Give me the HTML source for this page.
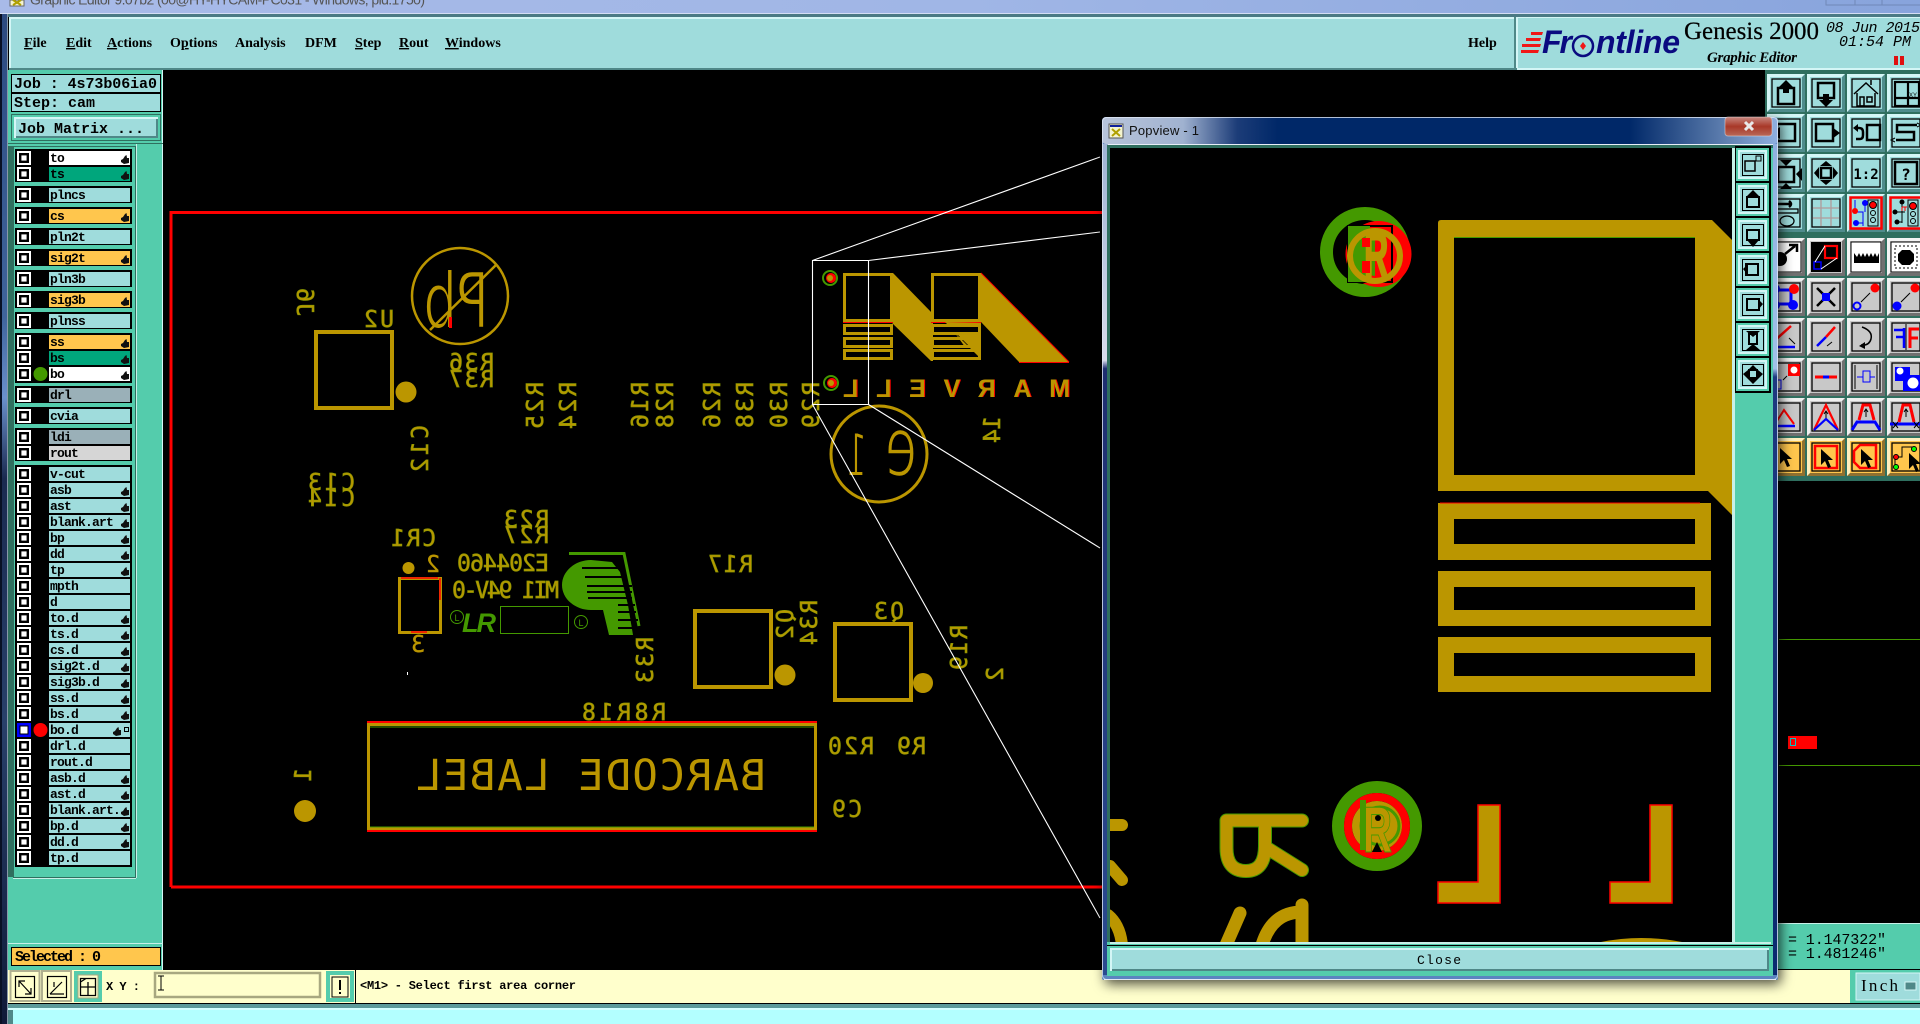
<!DOCTYPE html>
<html><head><meta charset="utf-8"><title>Graphic Editor</title>
<style>
html,body{margin:0;padding:0;background:#000;width:1920px;height:1024px;overflow:hidden}
svg{display:block}
.m{font-family:"Liberation Serif",serif;font-weight:700;font-size:14px;fill:#000}
.j{font-family:"Liberation Mono",monospace;font-weight:700;font-size:15px;fill:#000}
.l{font-family:"Liberation Mono",monospace;font-weight:700;font-size:13px;letter-spacing:-.8px;fill:#000}
.p{font-family:"DejaVu Sans Mono",monospace;font-size:23px;fill:#bb9600;stroke:#8c9a00;stroke-width:.7}
.q{font-family:"DejaVu Sans Mono",monospace;font-size:23px;fill:#bb9600;stroke:#bb9600;stroke-width:.4}
</style></head><body>
<svg xmlns="http://www.w3.org/2000/svg" width="1920" height="1024" viewBox="0 0 1920 1024">
<defs>
<linearGradient id="tb" x1="0" x2="1" y1="0" y2="0"><stop offset="0" stop-color="#a8bae8"/><stop offset=".5" stop-color="#a0b6e6"/><stop offset="1" stop-color="#88a4dc"/></linearGradient>
<linearGradient id="ls" x1="0" x2="0" y1="0" y2="1"><stop offset="0" stop-color="#2c4a80"/><stop offset=".3" stop-color="#3f649c"/><stop offset=".38" stop-color="#6a90cc"/><stop offset=".46" stop-color="#1a2a50"/><stop offset=".7" stop-color="#28406a"/><stop offset="1" stop-color="#101a38"/></linearGradient>
<linearGradient id="pt" x1="0" x2="1" y1="0" y2="0"><stop offset="0" stop-color="#b8c4da"/><stop offset=".12" stop-color="#a0b2d0"/><stop offset=".2" stop-color="#1c3c78"/><stop offset=".26" stop-color="#002868"/><stop offset=".78" stop-color="#002868"/><stop offset=".93" stop-color="#6484b4"/><stop offset="1" stop-color="#8fb0e0"/></linearGradient>
<linearGradient id="pl" x1="0" x2="0" y1="0" y2="1"><stop offset="0" stop-color="#9fb4d4"/><stop offset=".26" stop-color="#d8dcec"/><stop offset=".27" stop-color="#1e2e70"/><stop offset="1" stop-color="#2a4a90"/></linearGradient>
<linearGradient id="pr" x1="0" x2="0" y1="0" y2="1"><stop offset="0" stop-color="#8fb0e0"/><stop offset=".27" stop-color="#a0c0e8"/><stop offset=".28" stop-color="#1e3a80"/><stop offset="1" stop-color="#0a2a70"/></linearGradient>
<linearGradient id="rb" x1="0" x2="0" y1="0" y2="1"><stop offset="0" stop-color="#c88880"/><stop offset=".5" stop-color="#a83828"/><stop offset="1" stop-color="#b86858"/></linearGradient>
<filter id="sh" x="-5%" y="-5%" width="110%" height="110%"><feDropShadow dx="3" dy="4" stdDeviation="6" flood-color="#000" flood-opacity=".7"/></filter>
<g id="cb"><rect width="14" height="14" fill="#fff"/><rect x="3.200" y="3.200" width="7.600" height="7.600" fill="#fff" stroke="#000" stroke-width="2.400"/></g>
<path id="h" d="M0 5L2 4 4 1 5.500 0 6 3H8V8L3 9 0 7Z" fill="#111"/>
<g id="bt"><rect width="38" height="38" fill="#d4f6f6"/><path d="M38 0V38H0L3 35H35V3Z" fill="#4f8c8c"/><rect x="3" y="3" width="32" height="32" fill="#9fdcdc"/><rect x="5" y="5" width="28" height="28" fill="none" stroke="#000" stroke-width="1.300"/></g>
<g id="bg"><rect width="38" height="38" fill="#f0f0f0"/><path d="M38 0V38H0L3 35H35V3Z" fill="#707070"/><rect x="3" y="3" width="32" height="32" fill="#c8c8c8"/><rect x="5" y="5" width="28" height="28" fill="none" stroke="#000" stroke-width="1.300"/></g>
<g id="bo"><rect width="38" height="38" fill="#fff0c0"/><path d="M38 0V38H0L3 35H35V3Z" fill="#907030"/><rect x="3" y="3" width="32" height="32" fill="#ffc64d"/><rect x="5" y="5" width="28" height="28" fill="none" stroke="#000" stroke-width="1.300"/></g>
<g id="bw"><rect width="38" height="38" fill="#f4f4f4"/><path d="M38 0V38H0L3 35H35V3Z" fill="#707070"/><rect x="3" y="3" width="32" height="32" fill="#c8c8c8"/></g>
<path id="ar" d="M0 0L0 16 4 12 7 19 10 18 7 11 12 11Z" fill="#000"/>
</defs>

<!-- desktop title -->
<rect width="1920" height="1024" fill="#000"/>
<rect width="1920" height="14" fill="url(#tb)"/>
<rect y="13" width="1920" height="1" fill="#d4def4"/>
<rect x="10" y="0" width="14" height="6" fill="#f4f4d0" stroke="#666"/><path d="M13 0L21 5M21 0L13 5" stroke="#b0a000" stroke-width="2"/>
<text x="30" y="4.500" font-family="'Liberation Sans',sans-serif" font-size="14" fill="#555" textLength="395">Graphic Editor 9.07b2 (00@HY-HYCAM-PC031 - Windows, pid.1750)</text>
<path d="M1826 0V5H1920M1855 0V5M1882 0V5" fill="none" stroke="#7088b8"/>
<rect y="14" width="8" height="1010" fill="url(#ls)"/><rect width="2" y="14" height="1010" fill="#081024"/><rect x="7" y="14" width="1" height="1010" fill="#8898a8"/>

<!-- menu bar -->
<rect x="8" y="14" width="1912" height="3" fill="#4a7a84"/>
<rect x="9" y="17" width="1508" height="53" fill="#d4f6f6"/><rect x="11" y="19" width="1504" height="49" fill="#9fdcdc"/><rect x="9" y="68" width="1508" height="2" fill="#4f8888"/>
<text class="m" x="24" y="47"><tspan text-decoration="underline">F</tspan>ile</text>
<text class="m" x="66" y="47"><tspan text-decoration="underline">E</tspan>dit</text>
<text class="m" x="107" y="47"><tspan text-decoration="underline">A</tspan>ctions</text>
<text class="m" x="170" y="47">O<tspan text-decoration="underline">p</tspan>tions</text>
<text class="m" x="235" y="47">Analysis</text>
<text class="m" x="305" y="47">DFM</text>
<text class="m" x="355" y="47"><tspan text-decoration="underline">S</tspan>tep</text>
<text class="m" x="399" y="47"><tspan text-decoration="underline">R</tspan>out</text>
<text class="m" x="445" y="47"><tspan text-decoration="underline">W</tspan>indows</text>
<text class="m" x="1468" y="47">Help</text>
<!-- frontline panel -->
<rect x="1517" y="17" width="403" height="53" fill="#d4f6f6"/><rect x="1518" y="18" width="402" height="50" fill="#9fdcdc"/><rect x="1514" y="17" width="2" height="53" fill="#4f8888"/>
<path d="M1531 32H1543L1542 35H1531ZM1526 38H1541L1540 41H1526ZM1522 44H1541L1540 47H1522ZM1521 50H1539L1538 53H1521Z" fill="#f01818"/>
<text x="1542" y="53" font-family="'Liberation Sans',sans-serif" font-weight="700" font-style="italic" font-size="32" fill="#0a0a80" textLength="30">Fr</text>
<circle cx="1583" cy="46" r="10" fill="none" stroke="#0a0a80" stroke-width="2.500"/><path d="M1583 42L1586 46 1583 50 1580 46Z" fill="#f01818"/>
<text x="1596" y="53" font-family="'Liberation Sans',sans-serif" font-weight="700" font-style="italic" font-size="32" fill="#0a0a80" textLength="84">ntline</text>
<text x="1684" y="39" font-family="'Liberation Serif',serif" font-size="25" fill="#000" stroke="#000" stroke-width=".2" textLength="135">Genesis 2000</text>
<text x="1707" y="62" font-family="'Liberation Serif',serif" font-weight="700" font-style="italic" font-size="15" fill="#000" textLength="90">Graphic Editor</text>
<text x="1826" y="32" font-family="'Liberation Mono',monospace" font-style="italic" font-size="15" fill="#000" textLength="94">08 Jun 2015</text>
<text x="1839" y="46" font-family="'Liberation Mono',monospace" font-style="italic" font-size="15" fill="#000" textLength="72">01:54 PM</text>
<rect x="1894" y="56" width="4" height="9" fill="#e01010"/><rect x="1900" y="56" width="4" height="9" fill="#e01010"/>

<!-- left panel -->
<rect x="8" y="70" width="155" height="900" fill="#54ccac"/>
<rect x="162" y="70" width="1" height="900" fill="#d4f6f6"/>
<rect x="11.500" y="74.500" width="149" height="18" fill="#9fdcdc" stroke="#000"/>
<rect x="11.500" y="93.500" width="149" height="18" fill="#9fdcdc" stroke="#000"/>
<text class="j" x="14" y="88" textLength="143">Job : 4s73b06ia0</text>
<text class="j" x="14" y="107">Step: cam</text>
<rect x="11.500" y="114.500" width="149" height="26" fill="#54ccac" stroke="#2f6f5f"/>
<rect x="14" y="117" width="144" height="21" fill="#d4f6f6"/><rect x="16" y="119" width="142" height="19" fill="#4f8888"/><rect x="16" y="119" width="140" height="17" fill="#9fdcdc"/>
<text class="j" x="18" y="133">Job Matrix ...</text>
<rect x="8" y="143" width="155" height="1" fill="#2f6f5f"/>
<rect x="8" y="146" width="5" height="731" fill="#2f6f5f"/>
<rect x="13.500" y="146.500" width="122" height="731" fill="#54ccac" stroke="#2f6f5f"/>
<rect x="137" y="144" width="24" height="733" fill="#54ccac"/><rect x="136" y="144" width="1" height="734" fill="#c8f0e8"/>
<rect x="13" y="878" width="123" height="1" fill="#c8f0e8"/>
<!-- group bg -->
<g fill="#000">
<rect x="15" y="149" width="117" height="33"/><rect x="15" y="186" width="117" height="17"/><rect x="15" y="207" width="117" height="17"/><rect x="15" y="228" width="117" height="17"/><rect x="15" y="249" width="117" height="17"/><rect x="15" y="270" width="117" height="17"/><rect x="15" y="291" width="117" height="17"/><rect x="15" y="312" width="117" height="17"/><rect x="15" y="333" width="117" height="50"/><rect x="15" y="386" width="117" height="17"/><rect x="15" y="407" width="117" height="17"/><rect x="15" y="428" width="117" height="33"/><rect x="15" y="465" width="117" height="402"/>
</g>
<!-- rows -->
<g fill="#9fdcdc">
<rect x="49" y="151" width="81" height="14" fill="#fff"/><rect x="49" y="167" width="81" height="14" fill="#00a67c"/><rect x="49" y="188" width="81" height="14"/><rect x="49" y="209" width="81" height="14" fill="#ffc64d"/><rect x="49" y="230" width="81" height="14"/><rect x="49" y="251" width="81" height="14" fill="#ffc64d"/><rect x="49" y="272" width="81" height="14"/><rect x="49" y="293" width="81" height="14" fill="#ffc64d"/><rect x="49" y="314" width="81" height="14"/><rect x="49" y="335" width="81" height="14" fill="#ffc64d"/><rect x="49" y="351" width="81" height="14" fill="#00a67c"/><rect x="49" y="367" width="81" height="14" fill="#fff"/><rect x="49" y="388" width="81" height="14" fill="#9ab0b8"/><rect x="49" y="409" width="81" height="14"/><rect x="49" y="430" width="81" height="14" fill="#9ab0b8"/><rect x="49" y="446" width="81" height="14" fill="#d6d6d6"/>
<rect x="49" y="467" width="81" height="14"/><rect x="49" y="483" width="81" height="14"/><rect x="49" y="499" width="81" height="14"/><rect x="49" y="515" width="81" height="14"/><rect x="49" y="531" width="81" height="14"/><rect x="49" y="547" width="81" height="14"/><rect x="49" y="563" width="81" height="14"/><rect x="49" y="579" width="81" height="14"/><rect x="49" y="595" width="81" height="14"/><rect x="49" y="611" width="81" height="14"/><rect x="49" y="627" width="81" height="14"/><rect x="49" y="643" width="81" height="14"/><rect x="49" y="659" width="81" height="14"/><rect x="49" y="675" width="81" height="14"/><rect x="49" y="691" width="81" height="14"/><rect x="49" y="707" width="81" height="14"/><rect x="49" y="723" width="81" height="14"/><rect x="49" y="739" width="81" height="14"/><rect x="49" y="755" width="81" height="14"/><rect x="49" y="771" width="81" height="14"/><rect x="49" y="787" width="81" height="14"/><rect x="49" y="803" width="81" height="14"/><rect x="49" y="819" width="81" height="14"/><rect x="49" y="835" width="81" height="14"/><rect x="49" y="851" width="81" height="14"/>
</g>
<use href="#cb" x="17" y="151"/><use href="#cb" x="17" y="167"/><use href="#cb" x="17" y="188"/><use href="#cb" x="17" y="209"/><use href="#cb" x="17" y="230"/><use href="#cb" x="17" y="251"/><use href="#cb" x="17" y="272"/><use href="#cb" x="17" y="293"/><use href="#cb" x="17" y="314"/><use href="#cb" x="17" y="335"/><use href="#cb" x="17" y="351"/><use href="#cb" x="17" y="367"/><use href="#cb" x="17" y="388"/><use href="#cb" x="17" y="409"/><use href="#cb" x="17" y="430"/><use href="#cb" x="17" y="446"/><use href="#cb" x="17" y="467"/><use href="#cb" x="17" y="483"/><use href="#cb" x="17" y="499"/><use href="#cb" x="17" y="515"/><use href="#cb" x="17" y="531"/><use href="#cb" x="17" y="547"/><use href="#cb" x="17" y="563"/><use href="#cb" x="17" y="579"/><use href="#cb" x="17" y="595"/><use href="#cb" x="17" y="611"/><use href="#cb" x="17" y="627"/><use href="#cb" x="17" y="643"/><use href="#cb" x="17" y="659"/><use href="#cb" x="17" y="675"/><use href="#cb" x="17" y="691"/><use href="#cb" x="17" y="707"/><use href="#cb" x="17" y="723"/><use href="#cb" x="17" y="739"/><use href="#cb" x="17" y="755"/><use href="#cb" x="17" y="771"/><use href="#cb" x="17" y="787"/><use href="#cb" x="17" y="803"/><use href="#cb" x="17" y="819"/><use href="#cb" x="17" y="835"/><use href="#cb" x="17" y="851"/>
<rect x="17" y="723" width="14" height="14" fill="#00f"/><rect x="20" y="726" width="8" height="8" fill="#fff" stroke="#000"/>
<circle cx="40.500" cy="374" r="7" fill="#449900"/><circle cx="40.500" cy="730" r="7" fill="#f00"/>
<g>
<text class="l" x="50" y="162">to</text><text class="l" x="50" y="178">ts</text><text class="l" x="50" y="199">plncs</text><text class="l" x="50" y="220">cs</text><text class="l" x="50" y="241">pln2t</text><text class="l" x="50" y="262">sig2t</text><text class="l" x="50" y="283">pln3b</text><text class="l" x="50" y="304">sig3b</text><text class="l" x="50" y="325">plnss</text><text class="l" x="50" y="346">ss</text><text class="l" x="50" y="362">bs</text><text class="l" x="50" y="378">bo</text><text class="l" x="50" y="399">drl</text><text class="l" x="50" y="420">cvia</text><text class="l" x="50" y="441">ldi</text><text class="l" x="50" y="457">rout</text><text class="l" x="50" y="478">v-cut</text><text class="l" x="50" y="494">asb</text><text class="l" x="50" y="510">ast</text><text class="l" x="50" y="526">blank.art</text><text class="l" x="50" y="542">bp</text><text class="l" x="50" y="558">dd</text><text class="l" x="50" y="574">tp</text><text class="l" x="50" y="590">mpth</text><text class="l" x="50" y="606">d</text><text class="l" x="50" y="622">to.d</text><text class="l" x="50" y="638">ts.d</text><text class="l" x="50" y="654">cs.d</text><text class="l" x="50" y="670">sig2t.d</text><text class="l" x="50" y="686">sig3b.d</text><text class="l" x="50" y="702">ss.d</text><text class="l" x="50" y="718">bs.d</text><text class="l" x="50" y="734">bo.d</text><text class="l" x="50" y="750">drl.d</text><text class="l" x="50" y="766">rout.d</text><text class="l" x="50" y="782">asb.d</text><text class="l" x="50" y="798">ast.d</text><text class="l" x="50" y="814">blank.art.</text><text class="l" x="50" y="830">bp.d</text><text class="l" x="50" y="846">dd.d</text><text class="l" x="50" y="862">tp.d</text>
</g>
<use href="#h" x="121" y="155"/><use href="#h" x="121" y="171"/><use href="#h" x="121" y="213"/><use href="#h" x="121" y="255"/><use href="#h" x="121" y="297"/><use href="#h" x="121" y="339"/><use href="#h" x="121" y="355"/><use href="#h" x="121" y="371"/><use href="#h" x="121" y="487"/><use href="#h" x="121" y="503"/><use href="#h" x="121" y="519"/><use href="#h" x="121" y="535"/><use href="#h" x="121" y="551"/><use href="#h" x="121" y="567"/><use href="#h" x="121" y="615"/><use href="#h" x="121" y="631"/><use href="#h" x="121" y="647"/><use href="#h" x="121" y="663"/><use href="#h" x="121" y="679"/><use href="#h" x="121" y="695"/><use href="#h" x="121" y="711"/><use href="#h" x="113" y="727"/><use href="#h" x="121" y="775"/><use href="#h" x="121" y="791"/><use href="#h" x="121" y="807"/><use href="#h" x="121" y="823"/><use href="#h" x="121" y="839"/>
<rect x="124.500" y="727.500" width="4" height="4" fill="none" stroke="#000"/>
<rect x="8" y="943" width="155" height="1" fill="#c8f0e8"/>
<rect x="11.500" y="947.500" width="149" height="18" fill="#ffc64d" stroke="#000"/>
<text class="j" x="15" y="961" font-size="14" textLength="86">Selected : 0</text>

<!-- bottom bars -->
<rect x="8" y="970" width="1847" height="33" fill="#ffffcc"/>
<rect x="8" y="1003" width="1912" height="1" fill="#000"/><rect x="8" y="1004" width="1912" height="4" fill="#5c9a9a"/><rect x="8" y="1008" width="1912" height="2" fill="#d4ffff"/><rect x="13" y="1010" width="1907" height="14" fill="#b3ffff"/><rect x="8" y="1010" width="5" height="14" fill="#4f8888"/>
<g fill="none" stroke="#000" stroke-width="1.200">
<rect x="10.500" y="971" width="29" height="30" fill="#ffffcc" stroke="#b0b090" stroke-width="2"/><rect x="15.500" y="976.500" width="19" height="21"/><path d="M19 981L31 994M31 988V994H25M19 987V981H25"/>
<rect x="42" y="971" width="29" height="30" fill="#ffffcc" stroke="#b0b090" stroke-width="2"/><rect x="47.500" y="976.500" width="19" height="21"/><path d="M50 994L62 982M50 994H64M54 982V987"/>
</g>
<rect x="74" y="971" width="28" height="31" fill="#54ccac"/><rect x="78" y="975" width="20" height="23" fill="#ffffcc" stroke="#a8a880"/><path d="M80.500 978.500H95.500V995.500H80.500ZM88 982V995.500M80.500 987H95.500M80.500 982L86 978.500" fill="none" stroke="#000" stroke-width="1.300"/>
<text x="106" y="990" font-family="'Liberation Mono',monospace" font-weight="700" font-size="12" fill="#000" textLength="34">X Y :</text>
<rect x="155" y="973" width="165" height="24" fill="#ffffcc" stroke="#a8a880" stroke-width="2.500"/>
<path d="M158 976H164M161 976V990M158 990H164" stroke="#000" fill="none"/>
<rect x="326" y="971" width="28" height="31" fill="#54ccac"/><rect x="330" y="975" width="20" height="23" fill="#ffffcc"/><rect x="332" y="977" width="16" height="20" fill="none" stroke="#000"/><path d="M340 980V990M340 992V994" stroke="#000" stroke-width="2"/>
<rect x="355" y="970" width="1" height="33" fill="#000"/>
<text x="360" y="989" font-family="'Liberation Mono',monospace" font-weight="700" font-size="12" fill="#000" textLength="216">&lt;M1&gt; - Select first area corner</text>
<rect x="1850" y="970" width="70" height="33" fill="#54ccac"/><rect x="1856" y="973" width="64" height="27" fill="#9fdcdc" stroke="#d4f6f6"/>
<text x="1861" y="991" font-family="'Liberation Serif',serif" font-size="17" fill="#000" textLength="37">Inch</text>
<rect x="1905" y="982" width="11" height="8" fill="#4f8888" stroke="#d4f6f6"/>
<rect x="1778" y="923" width="142" height="46" fill="#54ccac"/><rect x="1778" y="923" width="142" height="1" fill="#c8f0e8"/>
<text x="1788" y="944" font-family="'Liberation Mono',monospace" font-size="15" fill="#000" textLength="98">= 1.147322"</text>
<text x="1788" y="958" font-family="'Liberation Mono',monospace" font-size="15" fill="#000" textLength="98">= 1.481246"</text>

<!-- PCB main -->
<path d="M171 887V212.500H1110M171 887H1110" fill="none" stroke="#f00" stroke-width="3"/>
<text transform="translate(489,328) scale(-.68,1)" font-family="'DejaVu Sans',sans-serif" font-size="78" fill="#bb9600" stroke="#000" stroke-width="2">Pb</text>
<g fill="none" stroke="#bb9600">
<rect x="316" y="332" width="76" height="76" stroke-width="4"/>
<circle cx="460" cy="296" r="48" stroke-width="2.500"/>
<path d="M430 330L496 265" stroke-width="2.500"/>
<rect x="399.500" y="578.500" width="41" height="54" stroke-width="3"/>
<rect x="695" y="611" width="76" height="76" stroke-width="4"/>
<rect x="835" y="624" width="76" height="76" stroke-width="4"/>
<rect x="368.500" y="724.500" width="447" height="104" stroke-width="3"/>
<circle cx="879" cy="454" r="48" stroke-width="3"/>
</g>
<path d="M401 578H438M440 578V600M411 632H427" stroke="#f00" stroke-width="1.500" fill="none"/>
<path d="M367 722H817M367 831H817" stroke="#f00" stroke-width="2"/><path d="M370 727H814M370 827H814" stroke="#449900" stroke-width="1"/>
<g fill="#bb9600"><circle cx="406" cy="392" r="10.500"/><circle cx="408.500" cy="568" r="6"/><circle cx="785" cy="675" r="10.500"/><circle cx="923" cy="683" r="10"/><circle cx="305" cy="811" r="11"/></g>
<rect x="407" y="672" width="1" height="3" fill="#fff"/>
<text transform="translate(867,476) scale(-.55,1)" font-family="'DejaVu Sans',sans-serif" font-size="60" fill="#bb9600" stroke="#000" stroke-width="2">1</text>
<text transform="translate(917,476) scale(-.62,1)" font-family="'DejaVu Sans',sans-serif" font-size="84" fill="#bb9600" stroke="#000" stroke-width="2.500">e</text>
<rect x="449" y="317" width="3" height="11" fill="#f00"/>
<!-- PCB text -->
<text class="p" transform="matrix(0 -1 -1 0 297 316)" textLength="28">J6</text>
<text class="p" transform="translate(394,327) scale(-1,1)" textLength="30">U2</text>
<text class="p" transform="translate(494,370) scale(-1,1)" textLength="45">R36</text>
<text class="p" transform="translate(494,387) scale(-1,1)" textLength="45">R37</text>
<text class="p" transform="matrix(0 1 1 0 543 382)" textLength="47">R25</text>
<text class="p" transform="matrix(0 1 1 0 576 382)" textLength="47">R24</text>
<text class="p" transform="matrix(0 1 1 0 648 382)" textLength="46">R16</text>
<text class="p" transform="matrix(0 1 1 0 673 382)" textLength="46">R28</text>
<text class="p" transform="matrix(0 1 1 0 720 382)" textLength="46">R26</text>
<text class="p" transform="matrix(0 1 1 0 753 382)" textLength="46">R38</text>
<text class="p" transform="matrix(0 1 1 0 787 382)" textLength="46">R30</text>
<text class="p" transform="matrix(0 1 1 0 819 382)" textLength="46">R29</text>
<text class="p" transform="matrix(0 1 1 0 428 425)" textLength="47">C12</text>
<text class="p" transform="translate(355,490) scale(-1,1)" textLength="47">C13</text>
<text class="p" transform="translate(355,506) scale(-1,1)" textLength="47">C14</text>
<text class="p" transform="matrix(0 1 1 0 1000 416)" textLength="27">14</text>
<text class="p" transform="translate(549,527) scale(-1,1)" textLength="45">R23</text>
<text class="p" transform="translate(549,543) scale(-1,1)" textLength="45">R27</text>
<text class="p" transform="translate(436,546) scale(-1,1)" textLength="45">CR1</text>
<text class="q" transform="translate(440,572) scale(-1,1)">2</text>
<text class="q" transform="translate(425,652) scale(-1,1)">3</text>
<text class="p" transform="translate(549,571) scale(-1,1)" textLength="92">E204460</text>
<text class="p" transform="translate(559,598) scale(-1,1)" textLength="107">MI1 94V-0</text>
<text class="p" transform="translate(753,572) scale(-1,1)" textLength="45">R 1 7</text>
<text class="p" transform="matrix(0 1 1 0 653 637)" textLength="46">R33</text>
<text class="p" transform="matrix(0 1 1 0 793 609)" textLength="30">Q2</text>
<text class="p" transform="matrix(0 1 1 0 817 600)" textLength="45">R34</text>
<text class="p" transform="translate(904,619) scale(-1,1)" textLength="30">Q3</text>
<text class="p" transform="matrix(0 1 1 0 967 625)" textLength="45">R19</text>
<text class="p" transform="matrix(0 1 1 0 1003 667)">2</text>
<text class="p" transform="translate(666,720) scale(-1,1)" textLength="84">R8R18</text>
<text class="p" transform="translate(874,754) scale(-1,1)" textLength="46">R20</text>
<text class="p" transform="translate(926,754) scale(-1,1)" textLength="29">R9</text>
<text class="p" transform="translate(862,817) scale(-1,1)" textLength="30">C9</text>
<text class="p" transform="matrix(0 1 1 0 311 768)">1</text>
<text class="q" style="font-size:42.500px;stroke-width:0" transform="translate(766,790) scale(-1,1)" textLength="350">BARCODE LABEL</text>
<!-- UL logo -->
<g fill="none" stroke="#449900"><rect x="500.500" y="606.500" width="68" height="27"/><circle cx="457" cy="617" r="6.500"/><circle cx="581" cy="622" r="6.500"/><path d="M569 553.500H624L639 626" stroke-width="3"/></g>
<text x="457" y="621" font-family="'Liberation Sans',sans-serif" font-size="9" fill="#449900" text-anchor="middle">L</text>
<text x="581" y="626" font-family="'Liberation Sans',sans-serif" font-size="9" fill="#449900" text-anchor="middle">L</text>
<text x="462" y="632" font-family="'Liberation Sans',sans-serif" font-weight="700" font-style="italic" font-size="27" fill="#449900" textLength="34">LR</text>
<path d="M591 560A29 25 0 0 0 591 610H603L609 635H633L628 605 620 572 612 562Z" fill="#449900"/>
<g stroke="#000" stroke-width="2"><path d="M582 568H625M585 577H625M587 586H632M587 592H632M588 598H632M618 605H635M618 612H636M618 620H638M618 628H638"/></g>
<!-- Marvell logo -->
<path d="M893 273L933 314V361H931L891 322Z" fill="#bb9600"/>
<path d="M981 273L1069 362H1019L981 322Z" fill="#bb9600"/>
<path d="M981 273L1069 362M1019 362.500H1069" stroke="#f00" fill="none"/>
<g fill="none" stroke="#bb9600" stroke-width="3">
<rect x="844.500" y="274.500" width="47" height="46"/><rect x="932.500" y="274.500" width="47" height="46"/>
<rect x="844.500" y="325.500" width="47" height="8"/><rect x="844.500" y="338.500" width="47" height="8"/><rect x="844.500" y="350.500" width="47" height="8"/>
<rect x="932.500" y="325.500" width="47" height="8"/><rect x="932.500" y="338.500" width="47" height="8"/><rect x="932.500" y="350.500" width="47" height="8"/>
</g>
<path d="M843 322.500H893M931 322.500H981" stroke="#f00"/>
<path d="M945 322L981 358V323ZM955 333L980 358V347H965Z" fill="#bb9600"/>
<rect x="936" y="327" width="42" height="5" fill="#000"/>
<text transform="translate(1071,397) scale(-1,1)" font-family="'Liberation Sans',sans-serif" font-weight="700" font-size="25" fill="#f00" textLength="227">MARVELL</text>
<text transform="translate(1070,397) scale(-1,1)" font-family="'Liberation Sans',sans-serif" font-weight="700" font-size="25" fill="#bb9600" textLength="227">MARVELL</text>
<g><circle cx="830" cy="278" r="7" fill="none" stroke="#449900" stroke-width="2"/><circle cx="831" cy="278" r="5" fill="#f00"/><circle cx="830" cy="278" r="3" fill="#bb9600"/><circle cx="831" cy="383" r="7" fill="none" stroke="#449900" stroke-width="2"/><circle cx="832" cy="383" r="5" fill="#f00"/><circle cx="831" cy="383" r="3" fill="#bb9600"/></g>
<!-- projection lines -->
<path d="M812.500 260.500H868.500V404.500H812.500ZM812.500 260.500L1100 157M868.500 260.500L1100 232M868.500 404.500L1100 548M812.500 404.500L1100 918" fill="none" stroke="#fff" stroke-width="1.100"/>

<!-- right lower region -->
<path d="M1779 765.500H1920M1779 639.500H1920" stroke="#449900"/>
<rect x="1788" y="736" width="29" height="13" fill="#f00"/><rect x="1790" y="738" width="6" height="8" fill="#00c8c8"/><rect x="1791" y="739" width="4" height="6" fill="#f00"/>

<!-- right toolbar -->
<rect x="1765" y="70" width="155" height="411" fill="#2f6f5f"/>
<use href="#bt" x="1767" y="74"/><use href="#bt" x="1807" y="74"/><use href="#bt" x="1847" y="74"/><use href="#bt" x="1887" y="74"/>
<use href="#bt" x="1767" y="114"/><use href="#bt" x="1807" y="114"/><use href="#bt" x="1847" y="114"/><use href="#bt" x="1887" y="114"/>
<use href="#bt" x="1767" y="154"/><use href="#bt" x="1807" y="154"/><use href="#bt" x="1847" y="154"/><use href="#bt" x="1887" y="154"/>
<use href="#bt" x="1767" y="194"/><use href="#bt" x="1807" y="194"/><use href="#bt" x="1847" y="194"/><use href="#bt" x="1887" y="194"/>
<use href="#bw" x="1767" y="238"/><use href="#bw" x="1807" y="238"/><use href="#bw" x="1847" y="238"/><use href="#bw" x="1887" y="238"/>
<use href="#bg" x="1767" y="278"/><use href="#bg" x="1807" y="278"/><use href="#bg" x="1847" y="278"/><use href="#bg" x="1887" y="278"/>
<use href="#bg" x="1767" y="318"/><use href="#bg" x="1807" y="318"/><use href="#bg" x="1847" y="318"/><use href="#bg" x="1887" y="318"/>
<use href="#bg" x="1767" y="358"/><use href="#bg" x="1807" y="358"/><use href="#bg" x="1847" y="358"/><use href="#bg" x="1887" y="358"/>
<use href="#bg" x="1767" y="398"/><use href="#bg" x="1807" y="398"/><use href="#bg" x="1847" y="398"/><use href="#bg" x="1887" y="398"/>
<use href="#bo" x="1767" y="438"/><use href="#bo" x="1807" y="438"/><use href="#bo" x="1847" y="438"/><use href="#bo" x="1887" y="438"/>
<!-- row1 icons -->
<g transform="translate(1767,74)"><rect x="11" y="14" width="16" height="16" fill="none" stroke="#000" stroke-width="2.500"/><path d="M19 6L26 13H22V19H16V13H12Z"/></g>
<g transform="translate(1807,74)"><rect x="11" y="9" width="16" height="15" fill="none" stroke="#000" stroke-width="2.500"/><path d="M19 33L26 26H22V20H16V26H12Z"/></g>
<g transform="translate(1847,74)" fill="none" stroke="#000" stroke-width="1.500"><path d="M7 20L19 9 31 20M10 19V32H28V19"/><path d="M24 11V6"/><rect x="13" y="23" width="4" height="9"/><rect x="20" y="23" width="5" height="5"/></g>
<g transform="translate(1887,74)" fill="none" stroke="#000" stroke-width="2.200"><rect x="8" y="8" width="24" height="24"/><path d="M21 8V32M8 24H32"/></g>
<text x="1909" y="97" font-family="'Liberation Sans',sans-serif" font-size="6" fill="#000">XY</text>
<!-- row2 -->
<g transform="translate(1767,114)"><rect x="10" y="10" width="18" height="17" fill="none" stroke="#000" stroke-width="2.500"/><path d="M5 19L13 13V25Z"/></g>
<g transform="translate(1807,114)"><rect x="9" y="10" width="17" height="17" fill="none" stroke="#000" stroke-width="2.500"/><path d="M33 19L25 13V25Z"/></g>
<g transform="translate(1847,114)"><rect x="20" y="11" width="13" height="15" fill="none" stroke="#000" stroke-width="2.500"/><path d="M9 25H13Q16 25 16 21V18Q16 14 12 14H9" fill="none" stroke="#000" stroke-width="2.500"/><path d="M6 14L11 10V18Z"/></g>
<g transform="translate(1887,114)"><path d="M30 11H10V18H27V26H9" fill="none" stroke="#000" stroke-width="2.500"/><path d="M30 9L34 11 30 13M8 24L4 26 8 28" fill="none" stroke="#000"/></g>
<!-- row3 -->
<g transform="translate(1767,154)"><rect x="11" y="13" width="16" height="15" fill="none" stroke="#000" stroke-width="2.500"/><path d="M19 12L13 6H25ZM19 29L13 35H25ZM29 20L35 14V27Z"/></g>
<g transform="translate(1807,154)"><rect x="14" y="14" width="10" height="10" fill="none" stroke="#000" stroke-width="2.500"/><path d="M19 7L25 12H13ZM19 31L25 26H13ZM7 19L12 13V25ZM31 19L26 13V25Z"/></g>
<text x="1866" y="179" font-family="'DejaVu Sans Mono',monospace" font-weight="700" font-size="14" text-anchor="middle" fill="#000">1:2</text>
<g transform="translate(1887,154)"><rect x="8" y="8" width="22" height="22" fill="none" stroke="#000" stroke-width="2.500"/></g>
<text x="1906" y="180" font-family="'DejaVu Sans Mono',monospace" font-weight="700" font-size="16" text-anchor="middle" fill="#000">?</text>
<!-- row4 -->
<g transform="translate(1767,194)" fill="none" stroke="#000" stroke-width="1.300"><path d="M5 10H24M22 7Q26 10 22 13" stroke-width="2.500"/><rect x="5" y="15" width="26" height="4"/><ellipse cx="20" cy="27" rx="7" ry="5"/></g>
<g transform="translate(1807,194)" fill="none" stroke="#b09a9a" stroke-width="1.300"><path d="M14 6V32M24 6V32M6 14H32M6 24H32"/></g>
<g transform="translate(1847,194)"><rect x="3.500" y="3.500" width="31" height="31" fill="#9fdcdc" stroke="#f00" stroke-width="2.500"/><rect x="21" y="6" width="10" height="26" fill="none" stroke="#000"/><circle cx="26" cy="11" r="3.500" fill="#f00" stroke="#000"/><circle cx="26" cy="19" r="2.500" fill="none" stroke="#000"/><circle cx="26" cy="26" r="2.500" fill="none" stroke="#000"/><path d="M8 18V6M18 6V18M8 18H16V32M8 29H16" stroke="#00f" fill="none" stroke-width="1"/><circle cx="8" cy="17" r="3" fill="#f00"/><circle cx="18" cy="9" r="3" fill="#00f"/><circle cx="9" cy="29" r="3" fill="#00f"/></g>
<g transform="translate(1887,194)"><rect x="3.500" y="3.500" width="31" height="31" fill="#9fdcdc" stroke="#f00" stroke-width="2.500"/><rect x="21" y="6" width="10" height="26" fill="none" stroke="#000"/><circle cx="26" cy="12" r="3.500" fill="#f00" stroke="#000"/><circle cx="26" cy="20" r="2.500" fill="none" stroke="#000"/><circle cx="26" cy="27" r="2.500" fill="none" stroke="#000"/><path d="M8 18H18M15 8V29M10 28H15" stroke="#000" fill="none"/><circle cx="15" cy="8" r="2.500"/><circle cx="8" cy="18" r="2.500"/><circle cx="10" cy="28" r="2.500"/><path d="M15 13H20M15 13V17M18 13V17" stroke="#f00"/></g>
<!-- row5 -->
<g transform="translate(1767,238)"><rect x="4" y="4" width="30" height="30" fill="#fff" stroke="#000" stroke-width="1"/><circle cx="13" cy="21" r="7"/><path d="M18 16L28 8M22 7H30V14" stroke="#000" stroke-width="2.500" fill="none"/></g>
<g transform="translate(1807,238)"><rect x="4" y="4" width="30" height="30" fill="#000"/><rect x="18" y="8" width="12" height="12" fill="none" stroke="#f00" stroke-width="2.200"/><rect x="7" y="24" width="7" height="7" fill="none" stroke="#00f" stroke-width="1.500"/><path d="M18 8L8 24M30 20L14 31" stroke="#fff"/></g>
<g transform="translate(1847,238)"><rect x="4" y="4" width="30" height="30" fill="#fff" stroke="#000"/><path d="M7 15V25H32V15L30 19 28 15 26 19 24 15 22 19 20 15 18 19 16 15 14 19 12 15 10 19Z"/></g>
<g transform="translate(1887,238)"><rect x="4" y="4" width="30" height="30" fill="#fff" stroke="#000"/><rect x="8" y="8" width="22" height="22" fill="none" stroke="#000" stroke-dasharray="2 2"/><path d="M15 12H23L27 16V23L23 27H15L11 23V16Z"/></g>
<!-- row6 -->
<g transform="translate(1767,278)"><path d="M10 12H24V26H10Z" fill="none" stroke="#00f" stroke-width="3"/><circle cx="8" cy="11" r="5" fill="#00f"/><circle cx="8" cy="27" r="5" fill="#00f"/><circle cx="26" cy="27" r="5" fill="#00f"/><circle cx="27" cy="11" r="5" fill="#f00"/></g>
<g transform="translate(1807,278)"><path d="M10 10L28 28M28 10L10 28" stroke="#000" stroke-width="2.500"/><rect x="15" y="15" width="8" height="8" fill="#00f"/></g>
<g transform="translate(1847,278)"><circle cx="10" cy="28" r="3.500" fill="none" stroke="#00f" stroke-width="2"/><circle cx="28" cy="10" r="4.500" fill="#f00"/><path d="M14 24L23 15" stroke="#000"/></g>
<g transform="translate(1887,278)"><circle cx="10" cy="28" r="4.500" fill="#00f"/><circle cx="28" cy="10" r="4.500" fill="#f00"/><path d="M14 24L23 15" stroke="#000"/></g>
<!-- row7 -->
<g transform="translate(1767,318)"><path d="M6 24L24 8" stroke="#f00" stroke-width="2.500"/><path d="M6 29H28" stroke="#00f" stroke-width="2.500"/><path d="M22 20L28 26" stroke="#000"/></g>
<g transform="translate(1807,318)"><path d="M10 28L19 19" stroke="#00f" stroke-width="2.500"/><path d="M19 19L28 9" stroke="#f00" stroke-width="2.500"/><path d="M20 28L25 24" stroke="#000"/></g>
<g transform="translate(1847,318)"><path d="M15 9Q26 13 24 21 22 28 14 27" fill="none" stroke="#000" stroke-width="1.500"/><path d="M18 24L12 28 18 31Z"/></g>
<g transform="translate(1887,318)"><path d="M7 12H17M9 19H17M17 10V30" fill="none" stroke="#00f" stroke-width="2.500"/><path d="M19 6V32" stroke="#000"/><path d="M23 30V11H32M23 20H31" fill="none" stroke="#f00" stroke-width="3"/></g>
<!-- row8 -->
<g transform="translate(1767,358)"><rect x="21" y="6" width="12" height="12" fill="#f00"/><circle cx="27" cy="12" r="3.500" fill="#fff"/><rect x="5" y="22" width="9" height="9" fill="none" stroke="#00f"/><path d="M16 22L20 18" stroke="#000"/></g>
<g transform="translate(1807,358)"><path d="M8 19H30" stroke="#f00" stroke-width="3"/><path d="M16 19H22" stroke="#00f" stroke-width="3"/></g>
<g transform="translate(1847,358)" fill="none"><path d="M8 7V31M30 7V31" stroke="#000"/><path d="M10 19H28" stroke="#00f"/><rect x="16" y="13" width="7" height="11" fill="#c8c8c8" stroke="#00f"/></g>
<g transform="translate(1887,358)"><rect x="8" y="9" width="15" height="14" fill="#00f"/><rect x="16" y="17" width="17" height="16" fill="#00f"/><circle cx="13" cy="13" r="3.500" fill="#fff"/><circle cx="26" cy="25" r="5.500" fill="#fff"/></g>
<!-- row9 -->
<g transform="translate(1767,398)"><path d="M8 26L17 12 27 26" fill="none" stroke="#f00" stroke-width="2"/><path d="M6 28H28" stroke="#00f" stroke-width="2.500"/></g>
<g transform="translate(1807,398)" fill="none"><path d="M7 32L19 7 31 32" stroke="#f00" stroke-width="2.200"/><path d="M7 32L19 21 31 32" stroke="#00f" stroke-width="2.200"/><path d="M19 14V20M17 16L19 13 21 16" stroke="#000"/></g>
<g transform="translate(1847,398)" fill="none"><path d="M12 22L16 7H23L27 22" stroke="#f00" stroke-width="3"/><path d="M5 32L10 24H28L33 32" stroke="#00f" stroke-width="3"/><path d="M19 12V19M17 14L19 11 21 14" stroke="#000"/></g>
<g transform="translate(1887,398)" fill="none"><path d="M12 24L16 7H23L27 24" stroke="#f00" stroke-width="3"/><path d="M3 26H36" stroke="#00f" stroke-width="3"/><path d="M19 12V19M17 14L19 11 21 14M6 24L11 30M11 24L6 30M27 24L32 30M32 24L27 30" stroke="#000"/></g>
<!-- row10 -->
<use href="#ar" x="1780" y="448"/>
<g transform="translate(1807,438)"><rect x="8" y="8" width="22" height="22" fill="none" stroke="#f00" stroke-width="2.500"/><use href="#ar" x="14" y="11"/></g>
<g transform="translate(1847,438)"><path d="M13 7H29V30H13L7 24V13Z" fill="none" stroke="#f00" stroke-width="2.500"/><use href="#ar" x="14" y="11"/></g>
<g transform="translate(1887,438)"><path d="M8 19V29M8 19H15V9H27" fill="none" stroke="#000"/><circle cx="9" cy="19" r="2.500" fill="#f00" stroke="#000"/><circle cx="9" cy="29" r="2.500" fill="#0f0" stroke="#000"/><circle cx="27" cy="11" r="2.500" fill="#0f0" stroke="#000"/><use href="#ar" x="22" y="15"/></g>

<!-- popup -->
<g>
<rect x="1102" y="117" width="676" height="863" rx="4" fill="#5b84c0" filter="url(#sh)"/>
<rect x="1102" y="117" width="676" height="27" rx="4" fill="url(#pt)"/>
<rect x="1102" y="144" width="6" height="832" fill="url(#pl)"/>
<rect x="1773" y="144" width="5" height="832" fill="url(#pr)"/>
<rect x="1102" y="975" width="676" height="5" rx="2" fill="#5b84c0"/><rect x="1104" y="979" width="672" height="1" fill="#e8eef8"/>
<rect x="1102.500" y="117.500" width="675" height="862" rx="4" fill="none" stroke="#dfe6f2" stroke-opacity=".8"/>
<rect x="1108" y="144" width="665" height="1" fill="#e8eef8"/>
<rect x="1107" y="145" width="666" height="831" fill="#54ccac"/>
<rect x="1107" y="145" width="666" height="3" fill="#2f6f5f"/><rect x="1107" y="145" width="3" height="797" fill="#2f6f5f"/>
<rect x="1110" y="148" width="622" height="794" fill="#000"/>
<rect x="1732" y="148" width="3" height="795" fill="#c8f0e8"/>
<rect x="1735" y="146" width="36" height="247" fill="#000"/><rect x="1735" y="393" width="36" height="549" fill="#54ccac"/>
<rect x="1110" y="942" width="661" height="2" fill="#c8f0e8"/><rect x="1107" y="945" width="666" height="1" fill="#000"/>
<rect x="1110" y="948" width="659" height="23" fill="#d4f6f6"/><rect x="1112" y="950" width="657" height="21" fill="#4f8888"/><rect x="1112" y="950" width="655" height="19" fill="#9fdcdc"/>
<text x="1439" y="964" text-anchor="middle" font-family="'Liberation Mono',monospace" font-size="13" fill="#000" textLength="44">Close</text>
<rect x="1109" y="124" width="14" height="14" fill="#f4f4d0" stroke="#555"/><rect x="1110" y="125" width="12" height="2" fill="#10209c"/><path d="M1112 129L1120 136M1120 129L1112 136" stroke="#b0a000" stroke-width="2"/>
<text x="1129" y="135" font-family="'Liberation Sans',sans-serif" font-size="13" fill="#101010" textLength="70">Popview - 1</text>
<rect x="1725" y="117" width="47" height="19" rx="3" fill="url(#rb)" stroke="#e8e0e0" stroke-opacity=".5"/>
<path d="M1745 122L1753 130M1753 122L1745 130" stroke="#e8e8e8" stroke-width="3"/>
<!-- popup toolbar -->
<rect x="1736" y="148" width="33" height="33" fill="#54ccac"/><rect x="1736" y="183" width="33" height="33" fill="#54ccac"/><rect x="1736" y="218" width="33" height="33" fill="#54ccac"/><rect x="1736" y="253" width="33" height="33" fill="#54ccac"/><rect x="1736" y="288" width="33" height="33" fill="#54ccac"/><rect x="1736" y="323" width="33" height="33" fill="#54ccac"/><rect x="1736" y="358" width="33" height="33" fill="#54ccac"/>
<g fill="#9fdcdc" stroke="#d4f6f6" stroke-width="2"><rect x="1739" y="151" width="27" height="27"/><rect x="1739" y="186" width="27" height="27"/><rect x="1739" y="221" width="27" height="27"/><rect x="1739" y="256" width="27" height="27"/><rect x="1739" y="291" width="27" height="27"/><rect x="1739" y="326" width="27" height="27"/><rect x="1739" y="361" width="27" height="27"/></g>
<g fill="none" stroke="#000"><rect x="1742.500" y="154.500" width="21" height="21"/><rect x="1742.500" y="189.500" width="21" height="21"/><rect x="1742.500" y="224.500" width="21" height="21"/><rect x="1742.500" y="259.500" width="21" height="21"/><rect x="1742.500" y="294.500" width="21" height="21"/><rect x="1742.500" y="329.500" width="21" height="21"/><rect x="1742.500" y="364.500" width="21" height="21"/></g>
<g fill="none" stroke="#000" stroke-width="1.500"><rect x="1745" y="161" width="10" height="10"/><rect x="1756" y="156" width="5" height="5" stroke-width="1"/>
<rect x="1747" y="197" width="12" height="10" stroke-width="2"/><rect x="1747" y="230" width="12" height="10" stroke-width="2"/><rect x="1746" y="264" width="12" height="11" stroke-width="2"/><rect x="1747" y="299" width="12" height="11" stroke-width="2"/><rect x="1749" y="334" width="8" height="10" stroke-width="2"/><rect x="1749" y="370" width="8" height="8" stroke-width="2"/></g>
<path d="M1753 190L1759 196H1747ZM1753 247L1759 240H1747ZM1743 269L1748 264V275ZM1763 304L1758 299V310ZM1746 331L1760 331 1753 337ZM1746 350L1760 350 1753 344ZM1753 365L1758 370H1748ZM1753 384L1758 379H1748ZM1743 374L1748 370V379ZM1763 374L1758 370V379Z"/>
</g>

<!-- popup view content -->
<svg x="1110" y="148" width="622" height="794" viewBox="1110 148 622 794">
<path d="M1438 223Q1438 220 1441 220H1712L1732 240V515L1708 491H1438ZM1454 237V475H1695V237Z" fill="#bb9600" fill-rule="evenodd"/>
<path d="M1454 237.500H1695" stroke="#449900"/>
<g fill="none" stroke="#bb9600" stroke-width="16"><rect x="1446" y="511" width="257" height="41"/><rect x="1446" y="579" width="257" height="39"/><rect x="1446" y="645" width="257" height="39"/></g>
<path d="M1440 503H1700" stroke="#f00" stroke-width="1"/>
<!-- top R -->
<circle cx="1365" cy="252" r="38.500" fill="none" stroke="#449900" stroke-width="13"/>
<circle cx="1378.500" cy="254" r="33" fill="#f00"/>
<rect x="1348" y="226" width="44" height="56" fill="none" stroke="#000" stroke-width="2"/>
<path d="M1348 226H1370V282H1348Z" fill="#449900"/>
<circle cx="1375" cy="256" r="25" fill="none" stroke="#bb9600" stroke-width="6"/>
<path d="M1355 252A22 22 0 0 1 1375 235V276A22 22 0 0 1 1355 252Z" fill="#449900"/>
<text transform="translate(1364,277) scale(.52,1)" font-family="'Liberation Sans',sans-serif" font-weight="700" font-size="65" fill="#bb9600" stroke="#bb9600" stroke-width="2">R</text>
<rect x="1362" y="238" width="8" height="9" fill="#f00"/><rect x="1362" y="261" width="8" height="12" fill="#f00"/>
<!-- bottom R -->
<circle cx="1377" cy="826" r="39" fill="none" stroke="#449900" stroke-width="12"/>
<circle cx="1377" cy="826" r="29" fill="none" stroke="#f00" stroke-width="8"/>
<circle cx="1377" cy="826" r="25" fill="#bb9600"/>
<circle cx="1380" cy="826" r="19" fill="none" stroke="#449900" stroke-width="3"/>
<rect x="1360" y="800" width="6" height="50" fill="#449900"/>
<text transform="translate(1363,852) scale(.62,1)" font-family="'Liberation Sans',sans-serif" font-weight="700" font-size="65" fill="#bb9600" stroke="#449900" stroke-width="1">R</text>
<path d="M1372 852H1382L1377 842Z" fill="#000"/><circle cx="1378" cy="818" r="3" fill="#000"/>
<!-- mirrored letters in zoom -->
<path d="M1302 820.500H1226.500V848Q1226.500 871 1246 871 1265 871 1265 846V820.500M1267 848L1302 870" fill="none" stroke="#449900" stroke-width="14" stroke-linecap="round" stroke-linejoin="round"/>
<path d="M1302 820.500H1226.500V848Q1226.500 871 1246 871 1265 871 1265 846V820.500M1267 848L1302 870" fill="none" stroke="#bb9600" stroke-width="12" stroke-linecap="round" stroke-linejoin="round"/>
<path d="M1240 913L1226 945M1302 905V945M1302 912Q1272 912 1262 945" fill="none" stroke="#bb9600" stroke-width="13" stroke-linecap="round"/>
<path d="M1110 825H1122M1110 866L1122 880M1108 915Q1120 925 1122 945" fill="none" stroke="#bb9600" stroke-width="12" stroke-linecap="round"/>
<path d="M1478 805H1500V903H1438V882H1478Z" fill="#bb9600" stroke="#f00" stroke-width="1.500"/>
<path d="M1650 805H1672V903H1610V882H1650Z" fill="#bb9600" stroke="#f00" stroke-width="1.500"/>
<path d="M1601 942Q1641 934 1682 942Z" fill="#bb9600"/>
</svg>
</svg>
</body></html>
